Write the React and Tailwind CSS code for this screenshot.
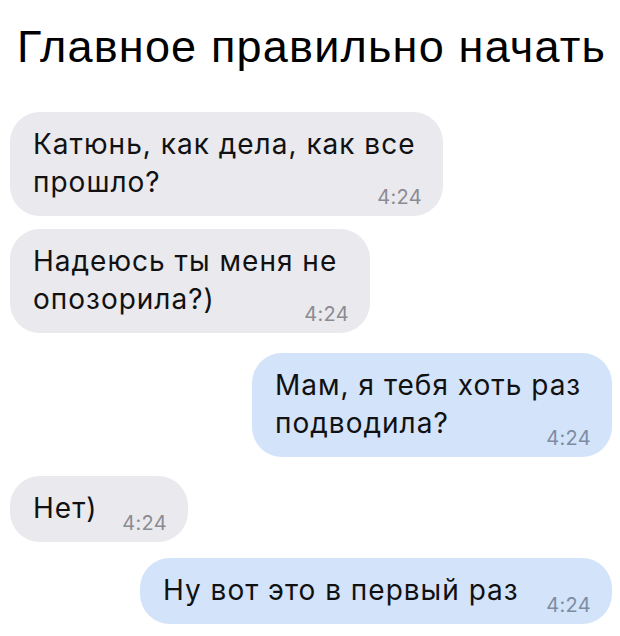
import React from "react";

function Bubble({ lines, side, width, mt }) {
  const mine = side === "right";
  const last = lines[lines.length - 1];
  const rest = lines.slice(0, -1);
  return (
    <div
      className={`${mine ? "self-end mr-[8px] bg-[#d3e3fa]" : "self-start ml-[10px] bg-[#e9e9ee]"} ${mt} ${width} rounded-[30px] pl-[23px] pr-[21px] pt-[13px] pb-[15px] text-[28px] leading-[38px] tracking-[1px] text-[#111]`}
      style={{ fontFamily: 'Inter, "Liberation Sans", sans-serif' }}
    >
      {rest.map((l, i) => (
        <div key={i} className="whitespace-nowrap">{l}</div>
      ))}
      <div className="flex items-end justify-between gap-3">
        <span className="whitespace-nowrap">{last}</span>
        <span
          className={`relative top-[7px] text-[20px] leading-[22px] tracking-[0.3px] whitespace-nowrap ${mine ? "text-[#7d8ca3]" : "text-[#8b8b91]"}`}
        >
          4:24
        </span>
      </div>
    </div>
  );
}

export default function App() {
  return (
    <div
      className="w-[620px] h-[636px] bg-white overflow-hidden flex flex-col"
      style={{ fontFamily: '"Liberation Sans", Arial, sans-serif' }}
    >
      <h1 className="mt-[22px] ml-[17px] text-[45px] leading-[50px] tracking-[1.2px] text-black font-normal whitespace-nowrap">
        Главное правильно начать
      </h1>
      <Bubble
        side="left"
        mt="mt-[40px]"
        width="w-[433px]"
        lines={["Катюнь, как дела, как все", "прошло?"]}
      />
      <Bubble
        side="left"
        mt="mt-[13px]"
        width="w-[360px]"
        lines={["Надеюсь ты меня не", "опозорила?)"]}
      />
      <Bubble
        side="right"
        mt="mt-[20px]"
        width="w-[360px]"
        lines={["Мам, я тебя хоть раз", "подводила?"]}
      />
      <Bubble side="left" mt="mt-[19px]" width="w-[178px]" lines={["Нет)"]} />
      <Bubble
        side="right"
        mt="mt-[16px]"
        width="w-[472px]"
        lines={["Ну вот это в первый раз"]}
      />
    </div>
  );
}
